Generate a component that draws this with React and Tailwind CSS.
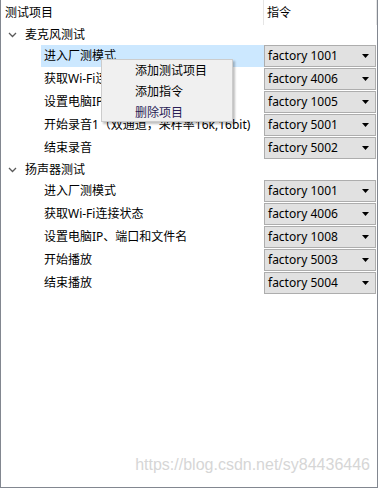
import React from "react";

const groups = [
  {
    name: "麦克风测试",
    items: [
      { label: "进入厂测模式", cmd: "factory 1001", selected: true },
      { label: "获取Wi-Fi连接状态", cmd: "factory 4006" },
      { label: "设置电脑IP、端口和文件名", cmd: "factory 1005" },
      { label: "开始录音1（双通道，采样率16k,16bit)", cmd: "factory 5001" },
      { label: "结束录音", cmd: "factory 5002" },
    ],
  },
  {
    name: "扬声器测试",
    items: [
      { label: "进入厂测模式", cmd: "factory 1001" },
      { label: "获取Wi-Fi连接状态", cmd: "factory 4006" },
      { label: "设置电脑IP、端口和文件名", cmd: "factory 1008" },
      { label: "开始播放", cmd: "factory 5003" },
      { label: "结束播放", cmd: "factory 5004" },
    ],
  },
];

function Chevron() {
  return (
    <svg width="9" height="6" viewBox="0 0 9 6" className="shrink-0">
      <path d="M1 1 L4.5 4.5 L8 1" fill="none" stroke="#5a5a5a" strokeWidth="1.3" />
    </svg>
  );
}

function Combo({ value }) {
  return (
    <div className="w-[112px] h-[22px] bg-[#e1e1e1] border border-[#adadad] flex items-center justify-between pl-[3px] pr-[6px] text-[12px] text-black font-['Noto_Sans',sans-serif]">
      <span>{value}</span>
      <svg width="7" height="4" viewBox="0 0 7 4">
        <path d="M0 0 H7 L3.5 4 Z" fill="#000" />
      </svg>
    </div>
  );
}

export default function App() {
  return (
    <div className="relative w-[378px] h-[488px] bg-white border-l border-r border-b border-[#828790] text-[12px] text-black font-['Noto_Sans','Noto_Sans_CJK_SC',sans-serif] overflow-hidden">
      <div className="flex h-[25px] items-center">
        <div className="w-[263px] h-full flex items-center pl-[4px] border-r border-[#e5e5e5]">测试项目</div>
        <div className="flex-1 h-full flex items-center pl-[3px] border-r border-[#e5e5e5]">指令</div>
      </div>

      {groups.map((g) => (
        <div key={g.name}>
          <div className="h-[20px] flex items-center pl-[7px] gap-[8px]">
            <Chevron />
            <span>{g.name}</span>
          </div>
          {g.items.map((it) => (
            <div key={it.cmd + it.label} className="h-[23px] flex items-start">
              <div className="w-[263px] h-[22px] pl-[40px] flex">
                <div className={`flex-1 flex items-center pl-[3px] whitespace-nowrap ${it.selected ? "bg-[#cce8ff]" : ""}`}>
                  {it.label}
                </div>
              </div>
              <Combo value={it.cmd} />
            </div>
          ))}
        </div>
      ))}

      <div className="absolute left-[100px] top-[59px] w-[132px] h-[63px] bg-[#f0f0f0] border border-[#cccccc] shadow-[2px_2px_2px_rgba(0,0,0,0.25)] pl-[33px]">
        <div className="h-[21px] flex items-center">添加测试项目</div>
        <div className="h-[21px] flex items-center">添加指令</div>
        <div className="h-[21px] flex items-center text-[#2a1d55]">删除项目</div>
      </div>

      <div className="absolute right-[7px] bottom-[10px] text-[16px] text-[#d6d6d6] font-['Liberation_Sans',sans-serif]">
        https://blog.csdn.net/sy84436446
      </div>
    </div>
  );
}
